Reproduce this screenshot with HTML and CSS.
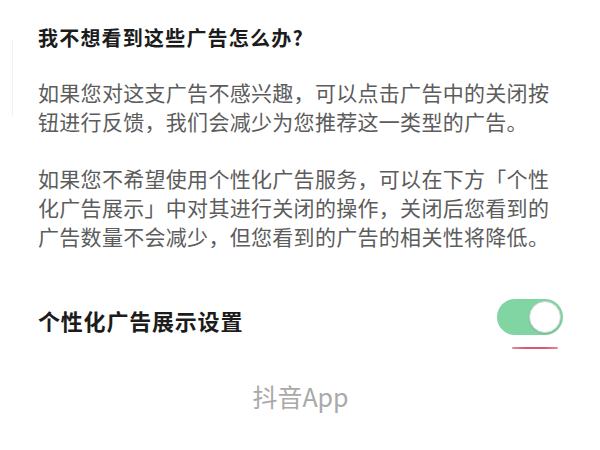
FILE: index.html
```html
<!DOCTYPE html>
<html lang="zh-CN">
<head>
<meta charset="utf-8">
<title>个性化广告</title>
<link rel="stylesheet" href="styles.css">
</head>
<body>
<main class="page">
  <section class="faq">
    <h1 class="faq-title">我不想看到这些广告怎么办?</h1>
    <p class="faq-text">如果您对这支广告不感兴趣，可以点击广告中的关闭按钮进行反馈，我们会减少为您推荐这一类型的广告。</p>
    <p class="faq-text">如果您不希望使用个性化广告服务，可以在下方「个性化广告展示」中对其进行关闭的操作，关闭后您看到的广告数量不会减少，但您看到的广告的相关性将降低。</p>
  </section>
  <section class="setting-row">
    <span class="setting-label">个性化广告展示设置</span>
    <div class="toggle-wrap">
      <div class="toggle"><span class="knob"></span></div>
      <span class="toggle-mark"></span>
    </div>
  </section>
  <footer class="brand">抖音App</footer>
</main>
</body>
</html>
```

FILE: styles.css
```css
html, body {
  margin: 0;
  padding: 0;
  background: #ffffff;
}
body {
  font-family: "Noto Sans CJK SC", "Noto Sans", sans-serif;
  width: 600px;
  height: 450px;
  overflow: hidden;
}
.page {
  padding: 24px 37px 0 38px;
}
.faq {
  position: relative;
}
.faq::before {
  content: "";
  position: absolute;
  left: -26px;
  top: 16px;
  width: 1px;
  height: 76px;
  background: #f0f0f0;
}
.faq-title {
  margin: 0;
  font-size: 20px;
  line-height: 28px;
  font-weight: 700;
  letter-spacing: 1.2px;
  color: #1c1c1c;
}
.faq-text {
  margin: 26px 0 0 0;
  font-size: 21px;
  line-height: 29px;
  letter-spacing: 0.3px;
  color: #5c5c5c;
}
.faq-text + .faq-text {
  margin-top: 28px;
}
.setting-row {
  margin-top: 48px;
  display: flex;
  justify-content: space-between;
  align-items: flex-start;
}
.setting-label {
  margin-top: 6px;
  font-size: 22px;
  line-height: 30px;
  font-weight: 700;
  letter-spacing: 0.8px;
  color: #1c1c1c;
}
.toggle-wrap {
  display: flex;
  flex-direction: column;
  align-items: flex-end;
}
.toggle {
  width: 66px;
  height: 36px;
  border-radius: 18px;
  background: #80d5a3;
  display: flex;
  align-items: center;
  justify-content: flex-end;
  padding-right: 2px;
  box-sizing: border-box;
}
.knob {
  width: 32px;
  height: 32px;
  border-radius: 50%;
  background: #ffffff;
  box-sizing: border-box;
  border: 1px solid #c9d3cd;
  box-shadow: 0 1px 2px rgba(0, 0, 0, 0.12);
}
.toggle-mark {
  margin-top: 12px;
  margin-right: 5px;
  width: 46px;
  height: 2px;
  border-radius: 1px;
  background: linear-gradient(90deg, rgba(214, 90, 110, 0.7), #d65a6e 30%, #d65a6e 70%, rgba(214, 90, 110, 0.7));
}
.brand {
  margin-top: 30px;
  text-align: center;
  font-size: 25px;
  line-height: 34px;
  color: #a9a9a9;
}
```
